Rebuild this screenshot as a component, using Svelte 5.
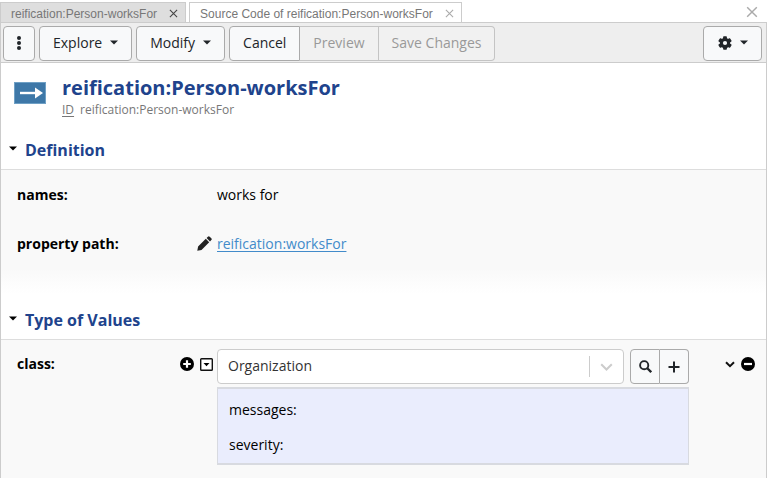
<script lang="ts">
	// Shape editor panel: document tabs, toolbar, then one section per property group.

	const tabs = [
		{ label: 'reification:Person-worksFor', active: true },
		{ label: 'Source Code of reification:Person-worksFor', active: false }
	];

	let definitionOpen = $state(true);
	let valuesOpen = $state(true);
	let classValue = $state('Organization');
</script>

{#snippet cross(size: number)}
	<svg width={size} height={size} viewBox="0 0 10 10" aria-hidden="true">
		<path d="M1 1l8 8M9 1l-8 8" fill="none" stroke="currentColor" stroke-width="1.2" />
	</svg>
{/snippet}

{#snippet caret()}
	<svg width="8" height="5" viewBox="0 0 8 5" aria-hidden="true">
		<path d="M0 0.5h8L4 4.5z" fill="currentColor" />
	</svg>
{/snippet}

<div class="window">
	<div class="tabs">
		{#each tabs as tab}
			<div class="tab" class:active={tab.active}>
				<span>{tab.label}</span>
				<button class="plain" aria-label="Close tab">{@render cross(9)}</button>
			</div>
		{/each}
		<button class="plain close-all" aria-label="Close all">{@render cross(12)}</button>
	</div>

	<div class="panel">
		<div class="toolbar">
			<button class="btn kebab" aria-label="More">
				<svg width="6" height="14" viewBox="0 0 6 14" fill="currentColor" aria-hidden="true">
					<circle cx="3" cy="2" r="2" />
					<circle cx="3" cy="7" r="2" />
					<circle cx="3" cy="12" r="2" />
				</svg>
			</button>
			<button class="btn">Explore {@render caret()}</button>
			<button class="btn">Modify {@render caret()}</button>
			<div class="group">
				<button class="btn">Cancel</button>
				<button class="btn" disabled>Preview</button>
				<button class="btn" disabled>Save Changes</button>
			</div>
			<button class="btn settings" aria-label="Settings">
				<svg width="14" height="14" viewBox="0 0 14 14" aria-hidden="true">
					<g fill="currentColor">
						<circle cx="7" cy="7" r="5.2" />
						{#each [0, 60, 120] as angle}
							<rect x="5.1" y="0.2" width="3.8" height="13.6" rx="0.8" transform="rotate({angle} 7 7)" />
						{/each}
					</g>
					<circle cx="7" cy="7" r="2.1" fill="#f8f9fa" />
				</svg>
				{@render caret()}
			</button>
		</div>

		<header class="heading">
			<svg class="type-icon" width="32" height="22" viewBox="0 0 32 22" aria-hidden="true">
				<rect x="0.5" y="0.5" width="31" height="21" fill="#3e78a8" stroke="#6fa0c5" />
				<path d="M6 11h16" stroke="#fff" stroke-width="2.4" />
				<path d="M21 5.5l8 5.5-8 5.5z" fill="#fff" />
			</svg>
			<div>
				<h1>reification:Person-worksFor</h1>
				<p class="id"><a href="#id">ID</a><span>reification:Person-worksFor</span></p>
			</div>
		</header>

		<section>
			<h2>
				<button class="plain toggle" aria-expanded={definitionOpen} onclick={() => (definitionOpen = !definitionOpen)}>
					{@render caret()}<span>Definition</span>
				</button>
			</h2>
			{#if definitionOpen}
				<div class="body fade">
					<div class="row">
						<div class="name"><b>names:</b></div>
						<div class="value">works for</div>
					</div>
					<div class="row">
						<div class="name">
							<b>property path:</b>
							<button class="plain" aria-label="Edit path">
								<svg width="15" height="15" viewBox="0 0 15 15" fill="#222" aria-hidden="true">
									<path d="M0.3 14.7l0.8-4.2 7.7-7.7 3.4 3.4-7.7 7.7zM9.6 2l1.3-1.3q0.9-0.9 1.8 0l1.6 1.6q0.9 0.9 0 1.8L13 5.4z" />
								</svg>
							</button>
						</div>
						<div class="value"><a class="path" href="#worksFor">reification:worksFor</a></div>
					</div>
				</div>
			{/if}
		</section>

		<section class="grow">
			<h2>
				<button class="plain toggle" aria-expanded={valuesOpen} onclick={() => (valuesOpen = !valuesOpen)}>
					{@render caret()}<span>Type of Values</span>
				</button>
			</h2>
			{#if valuesOpen}
				<div class="body values">
					<div class="row top">
						<div class="name field-name">
							<label for="class-value">class:</label>
							<span class="tools">
								<button class="plain" aria-label="Add value">
									<svg width="14" height="14" viewBox="0 0 14 14" aria-hidden="true">
										<circle cx="7" cy="7" r="7" />
										<path d="M7 3.2v7.6M3.2 7h7.6" stroke="#fff" stroke-width="2.2" />
									</svg>
								</button>
								<button class="plain" aria-label="Value options">
									<svg width="13" height="13" viewBox="0 0 13 13" aria-hidden="true">
										<rect x="0.7" y="0.7" width="11.6" height="11.6" rx="0.8" fill="#fff" stroke="#111" stroke-width="1.4" />
										<path d="M3.5 5h6l-3 3.2z" />
									</svg>
								</button>
							</span>
						</div>
						<div class="editor">
							<div class="inputs">
								<div class="combo">
									<input id="class-value" type="text" bind:value={classValue} />
									<button class="plain drop" aria-label="Show choices">
										<svg width="13" height="8" viewBox="0 0 13 8" aria-hidden="true">
											<path d="M1.2 1.2l5.3 5.3 5.3-5.3" fill="none" stroke="currentColor" stroke-width="2" />
										</svg>
									</button>
								</div>
								<div class="group">
									<button class="btn square search" aria-label="Search">
										<svg width="13" height="13" viewBox="0 0 13 13" fill="none" stroke="currentColor" aria-hidden="true">
											<circle cx="5.2" cy="5.2" r="4.1" stroke-width="1.9" />
											<path d="M8.3 8.3l3.9 3.9" stroke-width="2.3" />
										</svg>
									</button>
									<button class="btn square" aria-label="Create">
										<svg width="12" height="12" viewBox="0 0 12 12" aria-hidden="true">
											<path d="M6 0.5v11M0.5 6h11" stroke="currentColor" stroke-width="2" />
										</svg>
									</button>
								</div>
							</div>
							<div class="details">
								<div>messages:</div>
								<div>severity:</div>
							</div>
						</div>
						<div class="actions">
							<button class="plain" aria-label="Expand">
								<svg width="10" height="7" viewBox="0 0 10 7" aria-hidden="true">
									<path d="M1 1.2l4 3.9 4-3.9" fill="none" stroke="#111" stroke-width="2" />
								</svg>
							</button>
							<button class="plain" aria-label="Remove value">
								<svg width="14" height="14" viewBox="0 0 14 14" aria-hidden="true">
									<circle cx="7" cy="7" r="7" />
									<path d="M3 7h8" stroke="#fff" stroke-width="2.2" />
								</svg>
							</button>
						</div>
					</div>
				</div>
			{/if}
		</section>
	</div>
</div>

<style>
	:global(body) {
		margin: 0;
		background: #fff;
	}
	.window {
		box-sizing: border-box;
		display: flex;
		flex-direction: column;
		min-height: 100vh;
		padding: 2px 1px 0 0;
		font: 14px/20px 'Open Sans', sans-serif;
		color: #000;
	}
	.window * {
		box-sizing: border-box;
	}
	svg {
		display: block;
		flex: none;
	}
	button,
	input {
		font: inherit;
		color: inherit;
	}
	.plain {
		display: flex;
		padding: 0;
		border: 0;
		background: none;
	}

	.tabs {
		display: flex;
		gap: 3px;
		height: 20px;
		font: 12px/20px 'Liberation Sans', Arial, sans-serif;
		color: #777;
	}
	.tab {
		display: flex;
		align-items: center;
		gap: 12px;
		padding: 2px 7px 0 10px;
		border: 1px solid #ccc;
		border-bottom: 0;
		white-space: nowrap;
		background: #fff;
	}
	.tab .plain {
		color: #aaa;
	}
	.tab.active {
		background: #dedede;
	}
	.tab.active .plain {
		color: #444;
	}
	.close-all {
		align-items: center;
		margin-left: auto;
		padding-right: 9px;
		color: #aaa;
	}

	.panel {
		display: flex;
		flex: 1;
		flex-direction: column;
		border: 1px solid #ccc;
		border-bottom: 0;
	}
	.toolbar {
		display: flex;
		gap: 4px;
		padding: 3px 4px 1px 2px;
		border-bottom: 1px solid #ccc;
		background: #eee;
	}
	.btn {
		display: flex;
		align-items: center;
		justify-content: center;
		gap: 8px;
		height: 35px;
		padding: 0 13px 2px;
		border: 1px solid #aaa;
		border-radius: 4px;
		background: #f8f9fa;
		color: #212529;
		white-space: nowrap;
	}
	.btn:disabled {
		border-color: #c4c4c4;
		background: #f1f1f1;
		color: #999;
	}
	.kebab {
		width: 32px;
		padding: 0 0 2px;
	}
	.settings {
		width: 59px;
		padding: 0 0 2px;
		margin-left: auto;
	}
	.group {
		display: flex;
	}
	.group .btn:not(:first-child) {
		border-left: 0;
		border-top-left-radius: 0;
		border-bottom-left-radius: 0;
	}
	.group .btn:not(:last-child) {
		border-top-right-radius: 0;
		border-bottom-right-radius: 0;
	}

	.heading {
		display: flex;
		gap: 16px;
		padding: 12px 13px;
	}
	.type-icon {
		margin-top: 7px;
	}
	h1 {
		margin: 0;
		font-size: 20px;
		line-height: 26px;
		color: #20438c;
	}
	.id {
		display: flex;
		gap: 6px;
		margin: 0;
		font-size: 12px;
		line-height: 18px;
		color: #777;
	}
	.id a {
		color: inherit;
		text-underline-offset: 2px;
	}

	h2 {
		margin: 0;
		border-bottom: 1px solid #ddd;
		font-size: 16px;
		line-height: 38px;
		color: #20438c;
	}
	.toggle {
		align-items: center;
		gap: 8px;
		padding-left: 8px;
	}
	.toggle :global(svg) {
		margin-bottom: 4px;
		color: #000;
	}
	.grow {
		display: flex;
		flex: 1;
		flex-direction: column;
	}
	.body {
		padding: 0 11px 33px 16px;
		background: #f9f9f9;
	}
	.fade {
		background: linear-gradient(#f9f9f9 75%, #fff 95%);
	}
	.values {
		flex: 1;
		padding-top: 9px;
		padding-bottom: 12px;
	}
	.row {
		display: grid;
		grid-template-columns: 200px minmax(0, 1fr) auto;
		align-items: center;
		min-height: 49px;
	}
	.row.top {
		align-items: start;
	}
	.name {
		display: flex;
		align-items: center;
		justify-content: space-between;
		padding-right: 5px;
	}
	.field-name {
		height: 30px;
		padding-right: 4px;
		font-weight: 700;
	}
	.tools,
	.actions {
		display: flex;
		align-items: center;
		gap: 6px;
	}
	.actions {
		height: 30px;
		padding-left: 36px;
	}
	.path {
		color: #428bca;
		text-underline-offset: 2px;
	}
	.inputs {
		display: flex;
		gap: 6px;
	}
	.combo {
		display: flex;
		flex: 1;
		align-items: center;
		min-width: 0;
		height: 35px;
		border: 1px solid #ccc;
		border-radius: 4px;
		background: #fff;
	}
	.combo input {
		flex: 1;
		min-width: 0;
		padding: 0 10px 2px;
		border: 0;
		background: none;
		color: #333;
	}
	.drop {
		align-items: center;
		height: 21px;
		padding: 0 10px;
		border-left: 1px solid #ccc;
		color: #ccc;
	}
	.square {
		width: 29px;
		padding: 0;
	}
	.search {
		width: 30px;
	}
	.details {
		margin-top: 3px;
		padding: 3px 11px 1px;
		border: 2px solid #d8dae0;
		border-width: 2px 1px;
		background: #eaedfd;
		line-height: 35px;
	}
</style>
